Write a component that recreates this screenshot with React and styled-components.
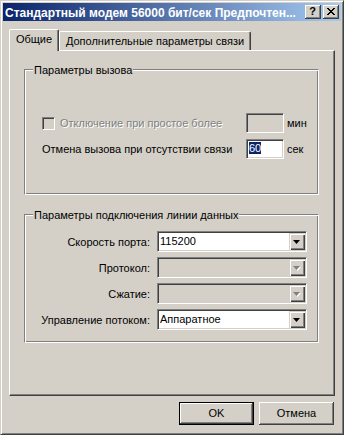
import React from "react";
import styled, { createGlobalStyle } from "styled-components";

const face = "#d4d0c8";
const shadow = "#808080";
const dark = "#404040";
const hilite = "#ffffff";

const GlobalStyle = createGlobalStyle`
  body {
    margin: 0;
    background: ${face};
    font-family: "Liberation Sans", Arial, sans-serif;
    font-size: 11px;
    color: #000;
  }
`;

const Window = styled.div`
  width: 344px;
  height: 435px;
  box-sizing: border-box;
  background: ${face};
  border: 1px solid;
  border-color: ${face} ${dark} ${dark} ${face};
  box-shadow: inset 1px 1px ${hilite}, inset -1px -1px ${shadow};
  padding: 2px;
  display: flex;
  flex-direction: column;
`;

const TitleBar = styled.div`
  height: 18px;
  display: flex;
  align-items: center;
  gap: 2px;
  padding: 0 2px;
  background: linear-gradient(to right, #0a246a, #a6caf0);
`;

const TitleText = styled.div`
  flex: 1;
  color: #fff;
  font-weight: bold;
  font-size: 12px;
  line-height: 14px;
  padding-top: 1px;
  white-space: nowrap;
  overflow: hidden;
`;

const TitleButton = styled.div`
  width: 16px;
  height: 14px;
  box-sizing: border-box;
  background: ${face};
  box-shadow: inset -1px -1px ${dark}, inset 1px 1px ${hilite},
    inset -2px -2px ${shadow};
  display: flex;
  align-items: center;
  justify-content: center;
  font-weight: bold;
  font-size: 11px;
  line-height: 11px;
  padding: 0 1px 1px 0;
`;

const Body = styled.div`
  flex: 1;
  display: flex;
  flex-direction: column;
  padding: 8px 6px 0;
`;

const TabRow = styled.div`
  height: 21px;
  display: flex;
  align-items: flex-end;
  position: relative;
  z-index: 1;
`;

const Tab = styled.div`
  box-sizing: border-box;
  width: ${p => p.w}px;
  height: ${p => (p.active ? 22 : 19)}px;
  margin-bottom: ${p => (p.active ? -1 : 0)}px;
  background: ${face};
  border-top: 1px solid ${hilite};
  border-left: 1px solid ${hilite};
  border-right: 1px solid ${dark};
  border-radius: 2px 2px 0 0;
  box-shadow: inset -1px 0 ${shadow};
  display: flex;
  align-items: center;
  justify-content: center;
  white-space: nowrap;
  line-height: 13px;
  padding-bottom: ${p => (p.active ? 2 : 0)}px;
`;

const Panel = styled.div`
  height: 346px;
  box-sizing: border-box;
  border-top: 1px solid ${hilite};
  border-left: 1px solid ${hilite};
  border-right: 1px solid ${dark};
  border-bottom: 1px solid ${dark};
  box-shadow: inset -1px -1px ${shadow};
  padding: 18px 15px 0 14px;
  display: flex;
  flex-direction: column;
  gap: 19px;
`;

const GroupBox = styled.div`
  position: relative;
  box-sizing: border-box;
  height: ${p => p.h}px;
  border: 1px solid;
  border-color: ${shadow} ${hilite} ${hilite} ${shadow};
  box-shadow: inset 1px 1px ${hilite}, inset -1px -1px ${shadow};
  padding: ${p => p.pad};
`;

const GroupTitle = styled.div`
  position: absolute;
  top: -6px;
  left: 8px;
  padding: 0 1px;
  background: ${face};
  line-height: 13px;
  white-space: nowrap;
`;

const CallGrid = styled.div`
  display: grid;
  grid-template-columns: 204px 38px auto;
  grid-auto-rows: 20px;
  row-gap: 6px;
  align-items: center;
`;

const Label = styled.div`
  display: flex;
  align-items: center;
  white-space: nowrap;
  line-height: 13px;
  color: ${p => (p.disabled ? shadow : "#000")};
  text-shadow: ${p => (p.disabled ? `1px 1px ${hilite}` : "none")};
  justify-content: ${p => (p.right ? "flex-end" : "flex-start")};
  padding-right: ${p => (p.right ? 1 : 0)}px;
  padding-top: ${p => (p.right ? 2 : 0)}px;
`;

const CheckBox = styled.div`
  width: 13px;
  height: 13px;
  box-sizing: border-box;
  margin-right: 5px;
  flex: none;
  background: ${p => (p.disabled ? face : "#fff")};
  border: 1px solid;
  border-color: ${shadow} ${hilite} ${hilite} ${shadow};
  box-shadow: inset 1px 1px ${dark}, inset -1px -1px ${face};
`;

const Edit = styled.div`
  height: 20px;
  box-sizing: border-box;
  background: ${p => (p.disabled ? face : "#fff")};
  border: 1px solid;
  border-color: ${shadow} ${hilite} ${hilite} ${shadow};
  box-shadow: inset 1px 1px ${dark}, inset -1px -1px ${face};
  padding: 2px 0 0 2px;
  line-height: 13px;
`;

const Selected = styled.span`
  background: #0a246a;
  color: #fff;
`;

const Unit = styled.div`
  padding-left: 3px;
  line-height: 13px;
`;

const LinkGrid = styled.div`
  display: grid;
  grid-template-columns: 126px 150px;
  grid-auto-rows: 21px;
  column-gap: 6px;
  row-gap: 5px;
`;

const Combo = styled.div`
  box-sizing: border-box;
  height: 21px;
  display: flex;
  background: ${p => (p.disabled ? face : "#fff")};
  border: 1px solid;
  border-color: ${shadow} ${hilite} ${hilite} ${shadow};
  box-shadow: inset 1px 1px ${dark}, inset -1px -1px ${face};
  padding: 1px;
`;

const ComboText = styled.div`
  flex: 1;
  line-height: 13px;
  padding: 2px 0 0 1px;
  white-space: nowrap;
`;

const DropButton = styled.div`
  width: 16px;
  height: 17px;
  box-sizing: border-box;
  background: ${face};
  box-shadow: inset 1px 1px ${face}, inset 2px 2px ${hilite},
    inset -1px -1px ${dark}, inset -2px -2px ${shadow};
  display: flex;
  align-items: center;
  justify-content: center;
  padding: 1px 0 0 0;
`;

const ButtonRow = styled.div`
  display: flex;
  justify-content: flex-end;
  gap: 5px;
  margin-top: 6px;
  padding-right: 1px;
`;

const Button = styled.div`
  width: 75px;
  height: 23px;
  box-sizing: border-box;
  background: ${face};
  border: ${p => (p.primary ? "1px solid #000" : "none")};
  box-shadow: inset -1px -1px ${dark}, inset 1px 1px ${hilite},
    inset -2px -2px ${shadow};
  display: flex;
  align-items: center;
  justify-content: center;
  line-height: 13px;
`;

const Arrow = ({ disabled }) => (
  <svg width="8" height="5" viewBox="0 0 8 5">
    {disabled && <polygon points="1,1 8,1 4.5,5" fill={hilite} />}
    <polygon points="0,0 7,0 3.5,4" fill={disabled ? shadow : "#000"} />
  </svg>
);

const CloseGlyph = () => (
  <svg width="8" height="7" viewBox="0 0 8 7">
    <path d="M0 0 L7 7 M1 0 L8 7 M7 0 L0 7 M8 0 L1 7" stroke="#000" strokeWidth="1" />
  </svg>
);

const ComboBox = ({ value, disabled }) => (
  <Combo disabled={disabled}>
    <ComboText>{value}</ComboText>
    <DropButton>
      <Arrow disabled={disabled} />
    </DropButton>
  </Combo>
);

export default function App() {
  return (
    <>
      <GlobalStyle />
      <Window>
        <TitleBar>
          <TitleText>Стандартный модем 56000 бит/сек Предпочтен...</TitleText>
          <TitleButton>?</TitleButton>
          <TitleButton>
            <CloseGlyph />
          </TitleButton>
        </TitleBar>
        <Body>
          <TabRow>
            <Tab active w={50}>Общие</Tab>
            <Tab w={192}>Дополнительные параметры связи</Tab>
          </TabRow>
          <Panel>
            <GroupBox h={126} pad="43px 0 0 17px">
              <GroupTitle>Параметры вызова</GroupTitle>
              <CallGrid>
                <Label disabled>
                  <CheckBox disabled />
                  Отключение при простое более
                </Label>
                <Edit disabled />
                <Unit>мин</Unit>
                <Label>Отмена вызова при отсутствии связи</Label>
                <Edit>
                  <Selected>60</Selected>
                </Edit>
                <Unit>сек</Unit>
              </CallGrid>
            </GroupBox>
            <GroupBox h={129} pad="16px 0 0 0">
              <GroupTitle>Параметры подключения линии данных</GroupTitle>
              <LinkGrid>
                <Label right>Скорость порта:</Label>
                <ComboBox value="115200" />
                <Label right>Протокол:</Label>
                <ComboBox disabled />
                <Label right>Сжатие:</Label>
                <ComboBox disabled />
                <Label right>Управление потоком:</Label>
                <ComboBox value="Аппаратное" />
              </LinkGrid>
            </GroupBox>
          </Panel>
          <ButtonRow>
            <Button primary>OK</Button>
            <Button>Отмена</Button>
          </ButtonRow>
        </Body>
      </Window>
    </>
  );
}
